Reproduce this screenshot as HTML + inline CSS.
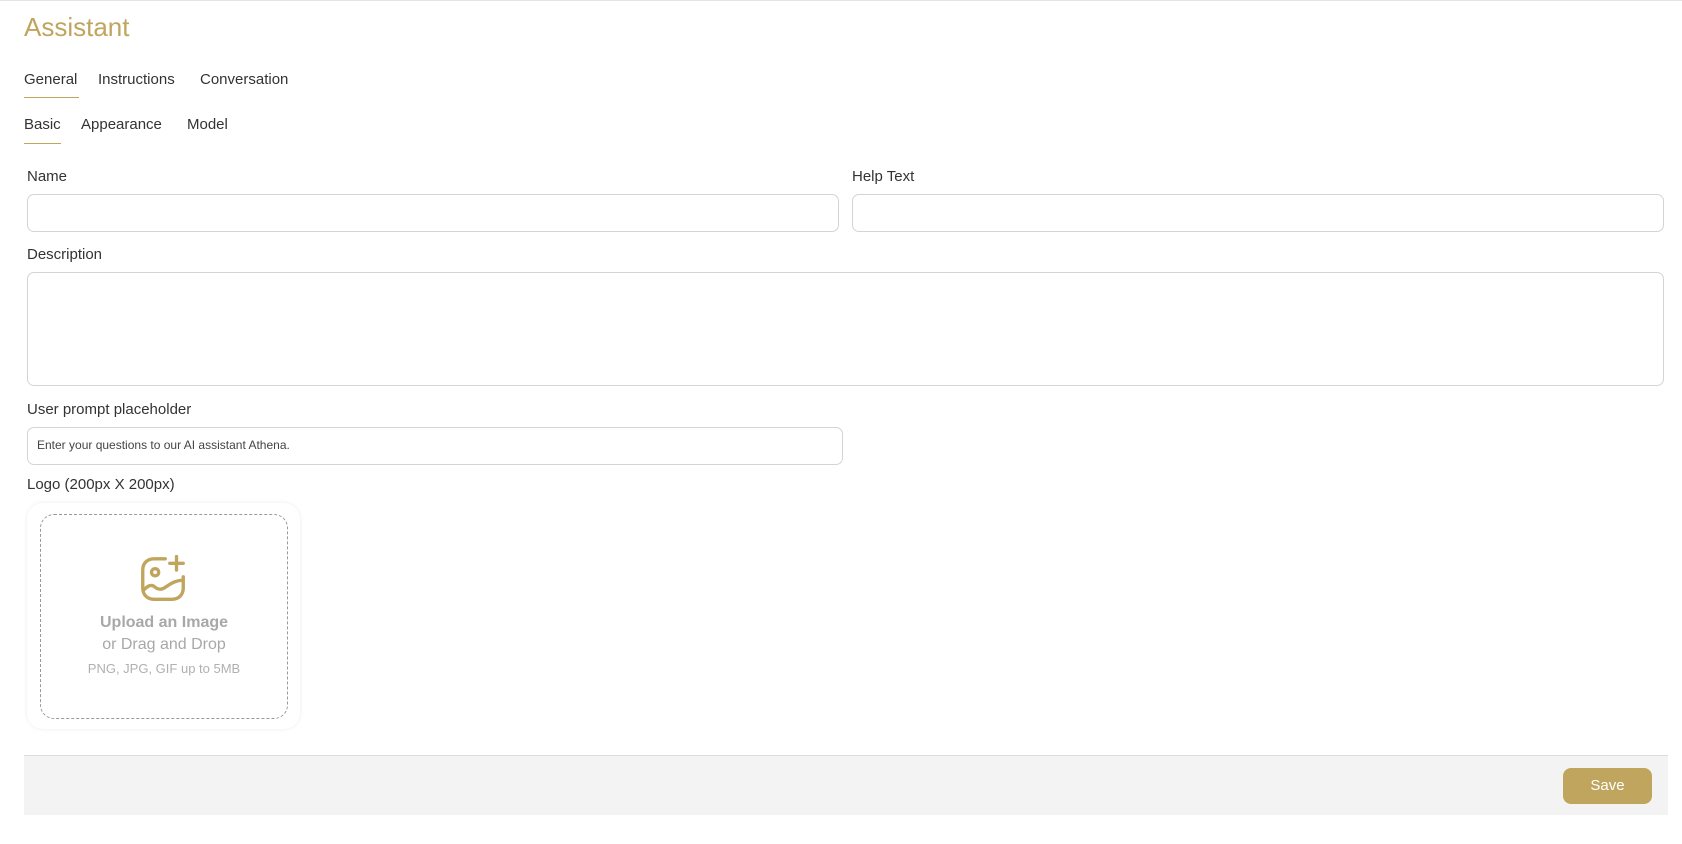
<!DOCTYPE html>
<html><head><meta charset="utf-8"><style>
*{box-sizing:border-box;margin:0;padding:0}
body{width:1682px;height:844px;background:#fff;font-family:"Liberation Sans",sans-serif;color:#333;position:relative;overflow:hidden;border-top:1px solid #e5e5e5}
.a{position:absolute;white-space:nowrap}
.t{font-size:15px;line-height:18px}
.in{position:absolute;border:1px solid #d4d4d4;border-radius:7px;background:#fff}
</style></head><body>
<div class="a" style="left:24px;top:11px;font-size:26px;color:#c0a55e">Assistant</div>
<div class="a t" style="left:24px;top:70px">General</div>
<div class="a t" style="left:98px;top:70px">Instructions</div>
<div class="a t" style="left:200px;top:70px">Conversation</div>
<div class="a" style="left:24px;top:96px;width:55px;height:1px;background:#c0a55e"></div>
<div class="a t" style="left:24px;top:115px">Basic</div>
<div class="a t" style="left:81px;top:115px">Appearance</div>
<div class="a t" style="left:187px;top:115px">Model</div>
<div class="a" style="left:24px;top:142px;width:37px;height:1px;background:#c0a55e"></div>
<div class="a t" style="left:27px;top:167px">Name</div>
<div class="a t" style="left:852px;top:167px">Help Text</div>
<div class="in" style="left:27px;top:193px;width:812px;height:38px"></div>
<div class="in" style="left:852px;top:193px;width:812px;height:38px"></div>
<div class="a t" style="left:27px;top:245px">Description</div>
<div class="in" style="left:27px;top:271px;width:1637px;height:114px"></div>
<div class="a t" style="left:27px;top:400px">User prompt placeholder</div>
<div class="in" style="left:27px;top:426px;width:816px;height:38px"></div>
<div class="a" style="left:37px;top:437px;font-size:12px;color:#444">Enter your questions to our AI assistant Athena.</div>
<div class="a t" style="left:27px;top:475px">Logo (200px X 200px)</div>
<div class="a" style="left:27px;top:502px;width:273px;height:226px;border-radius:16px;box-shadow:0 0 4px rgba(0,0,0,.08);background:#fff"></div>
<div class="a" style="left:40px;top:513px;width:248px;height:205px;border:1px dashed #999;border-radius:14px"></div>
<svg class="a" style="left:136px;top:551px" width="54" height="54" viewBox="0 0 24 24" fill="none" stroke="#c0a55e" stroke-width="1.5" stroke-linecap="round" stroke-linejoin="round">
<path d="M13 3H8C5 3 3 5 3 8v8c0 3 2 5 5 5h8c3 0 5-2 5-5v-5"/><path d="M18 2v6M15 5h6"/><circle cx="8.5" cy="9" r="1.6"/><path d="M3.3 17c2-2 3.5-2.8 5-1.5s3 1.5 5 0s4.5-3 7.5-3"/>
</svg>
<div class="a" style="left:40px;width:248px;top:613px;text-align:center;font-size:16px;font-weight:bold;color:#a8a8a8">Upload an Image</div>
<div class="a" style="left:40px;width:248px;top:635px;text-align:center;font-size:16px;color:#a8a8a8">or Drag and Drop</div>
<div class="a" style="left:40px;width:248px;top:660px;text-align:center;font-size:13px;color:#b0b0b0">PNG, JPG, GIF up to 5MB</div>
<div class="a" style="left:24px;top:754px;width:1644px;height:60px;background:#f3f3f3;border-top:1px solid #dcdcdc"></div>
<div class="a" style="left:1563px;top:767px;width:89px;height:36px;background:#c0a55e;border-radius:8px;color:#fff;font-size:15px;line-height:36px;text-align:center">Save</div>
</body></html>
